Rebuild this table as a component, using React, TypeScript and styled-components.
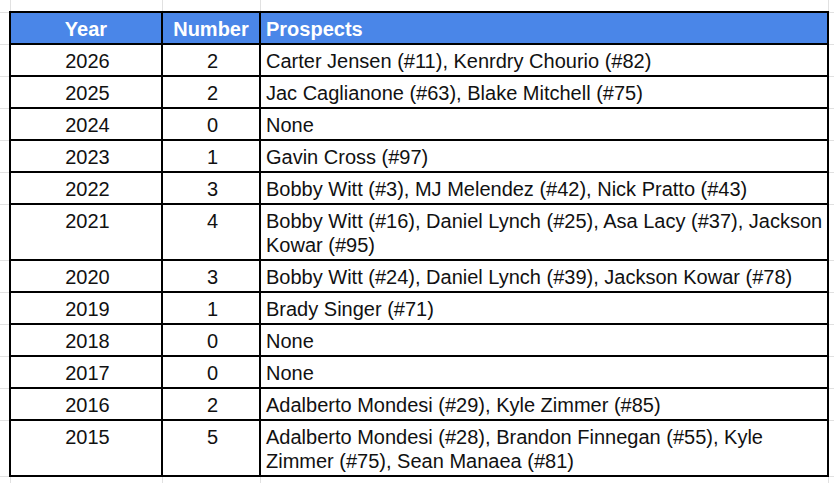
import React from 'react';
import styled, { createGlobalStyle } from 'styled-components';

type Entry = { year: number; count: number; prospects: string; tall?: boolean };

const entries: Entry[] = [
  { year: 2026, count: 2, prospects: 'Carter Jensen (#11), Kenrdry Chourio (#82)' },
  { year: 2025, count: 2, prospects: 'Jac Caglianone (#63), Blake Mitchell (#75)' },
  { year: 2024, count: 0, prospects: 'None' },
  { year: 2023, count: 1, prospects: 'Gavin Cross (#97)' },
  { year: 2022, count: 3, prospects: 'Bobby Witt (#3), MJ Melendez (#42), Nick Pratto (#43)' },
  {
    year: 2021,
    count: 4,
    prospects: 'Bobby Witt (#16), Daniel Lynch (#25), Asa Lacy (#37), Jackson Kowar (#95)',
    tall: true,
  },
  { year: 2020, count: 3, prospects: 'Bobby Witt (#24), Daniel Lynch (#39), Jackson Kowar (#78)' },
  { year: 2019, count: 1, prospects: 'Brady Singer (#71)' },
  { year: 2018, count: 0, prospects: 'None' },
  { year: 2017, count: 0, prospects: 'None' },
  { year: 2016, count: 2, prospects: 'Adalberto Mondesi (#29), Kyle Zimmer (#85)' },
  {
    year: 2015,
    count: 5,
    prospects: 'Adalberto Mondesi (#28), Brandon Finnegan (#55), Kyle Zimmer (#75), Sean Manaea (#81)',
    tall: true,
  },
];

const GlobalStyle = createGlobalStyle`
  html, body {
    margin: 0;
    padding: 0;
    background: #ffffff;
    overflow: hidden;
  }
  body {
    font-family: "Liberation Sans", Arial, sans-serif;
  }
`;

const Sheet = styled.table`
  width: 834px;
  border-collapse: collapse;
  table-layout: fixed;
  font-size: 20px;
  color: #111111;
`;

const Row = styled.tr<{ $h: number }>`
  height: ${(p) => p.$h}px;
`;

// spreadsheet grid lines around the table
const Gutter = styled.td`
  padding: 0;
  border-right: 1px solid #e1e1e1;
  border-bottom: 1px solid #e1e1e1;
`;

const HeadCell = styled.th<{ $align?: 'left' | 'center' }>`
  background: #4a86e8;
  color: #ffffff;
  font-weight: bold;
  text-align: ${(p) => p.$align || 'center'};
  border: 2px solid #000000;
  padding: 2px 5px 0;
  line-height: 24px;
  vertical-align: middle;
`;

const Cell = styled.td<{ $align?: 'left' | 'center' }>`
  text-align: ${(p) => p.$align || 'center'};
  border: 2px solid #000000;
  padding: 4px 2px 0 5px;
  line-height: 24px;
  vertical-align: top;
`;

export default function App() {
  return (
    <>
      <GlobalStyle />
      <Sheet>
        <colgroup>
          <col style={{ width: 10 }} />
          <col style={{ width: 152 }} />
          <col style={{ width: 98 }} />
          <col style={{ width: 568 }} />
          <col style={{ width: 6 }} />
        </colgroup>
        <tbody>
          <Row $h={12}>
            <Gutter />
            <Gutter />
            <Gutter />
            <Gutter />
            <Gutter />
          </Row>
          <Row $h={32}>
            <Gutter />
            <HeadCell>Year</HeadCell>
            <HeadCell>Number</HeadCell>
            <HeadCell $align="left">Prospects</HeadCell>
            <Gutter />
          </Row>
          {entries.map((e) => (
            <Row key={e.year} $h={e.tall ? 56 : 32}>
              <Gutter />
              <Cell>{e.year}</Cell>
              <Cell>{e.count}</Cell>
              <Cell $align="left">{e.prospects}</Cell>
              <Gutter />
            </Row>
          ))}
          <Row $h={10}>
            <Gutter />
            <Gutter />
            <Gutter />
            <Gutter />
            <Gutter />
          </Row>
        </tbody>
      </Sheet>
    </>
  );
}
